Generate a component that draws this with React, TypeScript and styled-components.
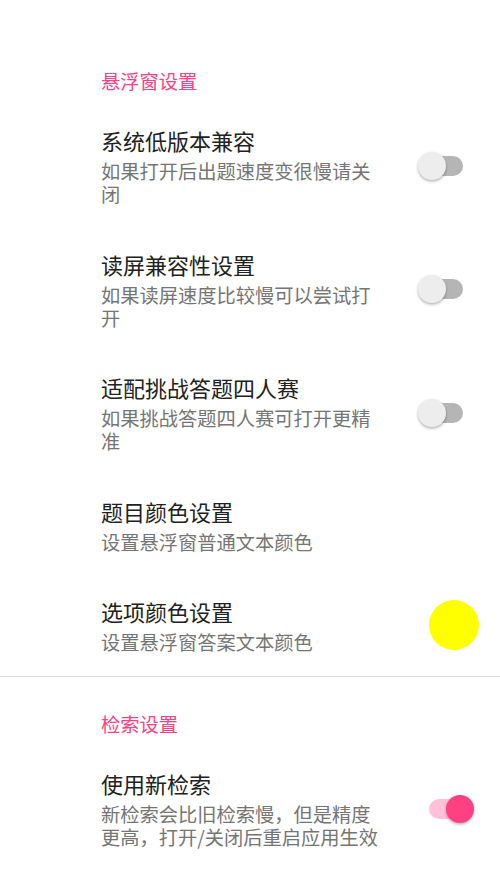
import React from 'react';
import styled, { createGlobalStyle } from 'styled-components';

const GlobalStyle = createGlobalStyle`
  html, body {
    margin: 0;
    padding: 0;
    background: #ffffff;
  }
  body {
    font-family: "Noto Sans CJK SC", "Noto Sans", Roboto, sans-serif;
  }
`;

const Page = styled.div`
  width: 500px;
  min-height: 889px;
  padding-top: 33.5px;
  box-sizing: border-box;
  background: #ffffff;
  overflow: hidden;
`;

const CategoryTitle = styled.div`
  padding: 35px 0 11.5px 101px;
  font-size: 19.25px;
  line-height: 24px;
  color: #ff4081;
`;

const Divider = styled.div`
  height: 1px;
  background: #dcdcdc;
`;

const Row = styled.div`
  display: flex;
  align-items: center;
  padding: 21px 21px 21.5px 101px;
`;

const TextCol = styled.div`
  flex: 1;
  min-width: 0;
  margin-right: 37px;
`;

const Title = styled.div`
  font-size: 22px;
  line-height: 30px;
  margin-bottom: 5px;
  color: #212121;
`;

const Summary = styled.div`
  font-size: 19.25px;
  line-height: 23px;
  color: #757575;
`;

const SwitchBox = styled.div`
  position: relative;
  width: 56px;
  height: 28px;
  margin-right: 5px;
  flex-shrink: 0;
`;

const Track = styled.div<{ $on: boolean }>`
  position: absolute;
  left: 11px;
  top: 4px;
  width: 34px;
  height: 20px;
  border-radius: 10px;
  background: ${p => (p.$on ? '#ffc2d7' : '#b5b5b5')};
`;

const Thumb = styled.div<{ $on: boolean }>`
  position: absolute;
  top: 0;
  left: ${p => (p.$on ? '28px' : '0')};
  width: 28px;
  height: 28px;
  border-radius: 50%;
  background: ${p => (p.$on ? '#ff4081' : '#ededed')};
  box-shadow: 0 1.5px 3px rgba(0, 0, 0, 0.3);
`;

const ColorDot = styled.div<{ $color: string }>`
  width: 50px;
  height: 50px;
  border-radius: 50%;
  background: ${p => p.$color};
  flex-shrink: 0;
`;

function Switch({ on }: { on: boolean }) {
  return (
    <SwitchBox>
      <Track $on={on} />
      <Thumb $on={on} />
    </SwitchBox>
  );
}

type Item = {
  title: string;
  summary: string;
  widget: React.ReactNode;
};

function Pref({ title, summary, widget }: Item) {
  return (
    <Row>
      <TextCol>
        <Title>{title}</Title>
        <Summary>{summary}</Summary>
      </TextCol>
      {widget}
    </Row>
  );
}

const floatItems: Item[] = [
  { title: '系统低版本兼容', summary: '如果打开后出题速度变很慢请关闭', widget: <Switch on={false} /> },
  { title: '读屏兼容性设置', summary: '如果读屏速度比较慢可以尝试打开', widget: <Switch on={false} /> },
  { title: '适配挑战答题四人赛', summary: '如果挑战答题四人赛可打开更精准', widget: <Switch on={false} /> },
  { title: '题目颜色设置', summary: '设置悬浮窗普通文本颜色', widget: null },
  { title: '选项颜色设置', summary: '设置悬浮窗答案文本颜色', widget: <ColorDot $color="#ffff00" /> },
];

export default function App() {
  return (
    <>
      <GlobalStyle />
      <Page>
        <CategoryTitle>悬浮窗设置</CategoryTitle>
        {floatItems.map(item => (
          <Pref key={item.title} {...item} />
        ))}
        <Divider />
        <CategoryTitle>检索设置</CategoryTitle>
        <Pref
          title="使用新检索"
          summary="新检索会比旧检索慢，但是精度更高，打开/关闭后重启应用生效"
          widget={<Switch on={true} />}
        />
      </Page>
    </>
  );
}
